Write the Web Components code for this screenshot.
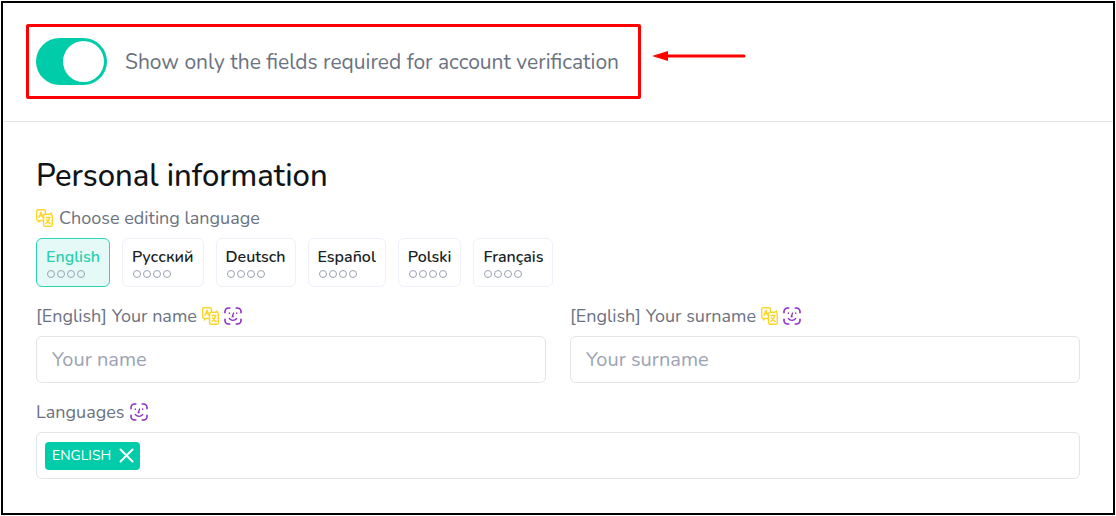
<!DOCTYPE html>
<html lang="en">
<head>
<meta charset="utf-8">
<title>Personal information</title>
<style>
  body {
    margin: 0;
    padding: 1px;
    background: #fff;
    color: #6b7280;
    font-family: Nunito, "Open Sans", "Noto Sans", sans-serif;
    --accent: #00ccaa;
    --line: #e2e4e8;
    --ink: #111417;
    --muted: #9ca3b4;
  }
</style>
</head>
<body>
<profile-page></profile-page>

<template id="profile-page">
  <style>
    :host { display: block; box-sizing: border-box; min-height: calc(100vh - 2px); border: 2px solid #000; }
    header { display: flex; align-items: center; gap: 11px; padding: 21px 24px 22px 23px; border-bottom: 1px solid var(--line); }
    .arrow { flex: none; margin-bottom: 12px; }
    main { padding: 34px 33px 33px; }
    h1 { margin: 0 0 10px; font-size: 31px; line-height: 40px; font-weight: 500; color: var(--ink); }
    .hint { display: flex; align-items: center; gap: 6px; margin-bottom: 8px; font-size: 18px; line-height: 24px; }
    .tabs { display: flex; flex-wrap: wrap; gap: 12px; margin-bottom: 17px; }
    .row { display: grid; grid-template-columns: 1fr 1fr; gap: 24px; margin-bottom: 17px; }
  </style>
  <header>
    <toggle-switch>Show only the fields required for account verification</toggle-switch>
    <svg class="arrow" width="94" height="10" viewBox="0 0 94 10" aria-hidden="true">
      <path d="M14 5H92" stroke="#f00" stroke-width="3" stroke-linecap="round"/>
      <path d="M0 5L16 0V10Z" fill="#f00"/>
    </svg>
  </header>
  <main>
    <h1>Personal information</h1>
    <div class="hint"><translate-icon></translate-icon><span>Choose editing language</span></div>
    <div class="tabs">
      <language-tab active>English</language-tab>
      <language-tab>Русский</language-tab>
      <language-tab>Deutsch</language-tab>
      <language-tab>Español</language-tab>
      <language-tab>Polski</language-tab>
      <language-tab>Français</language-tab>
    </div>
    <div class="row">
      <text-field label="[English] Your name" hint="Your name"><translate-icon></translate-icon><face-icon></face-icon></text-field>
      <text-field label="[English] Your surname" hint="Your surname"><translate-icon></translate-icon><face-icon></face-icon></text-field>
    </div>
    <tag-field label="Languages"><face-icon slot="icons"></face-icon><tag-chip>ENGLISH</tag-chip></tag-field>
  </main>
</template>

<template id="toggle-switch">
  <style>
    :host { display: block; min-width: 0; }
    label { display: flex; align-items: center; gap: 18px; padding: 11px 19px 11px 7px; border: 3px solid #f00; border-radius: 2px; font-size: 21px; line-height: 28px; cursor: pointer; }
    input { appearance: none; flex: none; display: flex; align-items: center; box-sizing: border-box; width: 71px; height: 47px; margin: 0; padding: 3px; border-radius: 24px; background: #c9ced6; cursor: pointer; }
    input::before { content: ""; width: 41px; height: 41px; border-radius: 50%; background: #fff; }
    input:checked { justify-content: flex-end; background: var(--accent); }
  </style>
  <label><input type="checkbox" role="switch" checked><span><slot></slot></span></label>
</template>

<template id="language-tab">
  <style>
    :host { display: block; }
    button { display: block; box-sizing: border-box; height: 49px; margin: 0; padding: 6px 9px; border: 1px solid #edf1fb; border-radius: 6px; background: #fff; color: #1b1f24; font: inherit; font-size: 16px; line-height: 22px; font-weight: 600; text-align: left; cursor: pointer; }
    .name { display: block; }
    :host([active]) button { border-color: #2bd4b4; background: #e5f9f6; color: #2bcfae; }
    .dots { display: flex; gap: 2px; padding: 2px 1px; }
    .dots i { box-sizing: border-box; width: 8px; height: 8px; border: 1px solid #9ba2b2; border-radius: 50%; }
  </style>
  <button type="button"><span class="name"><slot></slot></span><span class="dots"><i></i><i></i><i></i><i></i></span></button>
</template>

<template id="text-field">
  <style>
    :host { display: block; min-width: 0; }
    .head { display: flex; align-items: center; gap: 5px; margin-bottom: 8px; font-size: 18px; line-height: 24px; }
    input { display: block; box-sizing: border-box; width: 100%; height: 47px; margin: 0; padding: 0 15px; border: 1px solid var(--line); border-radius: 6px; background: #fff; color: var(--ink); font: inherit; font-size: 20px; }
    input::placeholder { color: var(--muted); opacity: 1; }
  </style>
  <div class="head"><label for="field"></label><slot></slot></div>
  <input id="field" type="text">
</template>

<template id="tag-field">
  <style>
    :host { display: block; }
    .head { display: flex; align-items: center; gap: 5px; margin-bottom: 8px; font-size: 18px; line-height: 24px; }
    .box { display: flex; align-items: center; box-sizing: border-box; min-height: 47px; padding: 8px; border: 1px solid var(--line); border-radius: 6px; }
  </style>
  <div class="head"><span id="caption"></span><slot name="icons"></slot></div>
  <div class="box" role="group" aria-labelledby="caption"><slot></slot></div>
</template>

<template id="tag-chip">
  <style>
    :host { display: flex; align-items: center; gap: 8px; box-sizing: border-box; height: 28px; padding: 0 6px 0 7px; border-radius: 4px; background: var(--accent); color: #fff; font-size: 14px; line-height: 20px; }
    button { display: flex; margin: 0; padding: 0; border: 0; background: none; color: inherit; cursor: pointer; }
  </style>
  <span><slot></slot></span>
  <button type="button" aria-label="Remove"><svg width="15" height="15" viewBox="0 0 15 15"><path d="M1.500 1.500L13.500 13.500M13.500 1.500L1.500 13.500" stroke="currentColor" stroke-width="2" stroke-linecap="round"/></svg></button>
</template>

<template id="translate-icon">
  <style>:host { display: block; flex: none; width: 17px; height: 18px; } svg { display: block; }</style>
  <svg width="17" height="18" viewBox="0 0 17 18" fill="none" stroke="#fdd52a" stroke-width="1.400" stroke-linejoin="round" stroke-linecap="round" aria-hidden="true">
    <path d="M7 11.500H3.500L2.400 13V11.500H2A1.400 1.400 0 0 1 .7 10.100V2A1.400 1.400 0 0 1 2 .7H8A1.400 1.400 0 0 1 9.400 2V5"/>
    <path d="M3 8.500L5 3.200L7 8.500M3.600 6.900H6.400"/>
    <path d="M9.200 5.300H13.800L15.400 4V5.600A1.400 1.400 0 0 1 16.300 7V16A1.400 1.400 0 0 1 15 17.300H9A1.400 1.400 0 0 1 7.600 16V7A1.600 1.600 0 0 1 9.200 5.300Z"/>
    <path d="M10 8.500H14M13.500 8.500C13.200 11.300 11.700 13.400 9.900 14.400M10.500 10.800C11.300 12.700 12.500 13.900 14.200 14.500"/>
  </svg>
</template>

<template id="face-icon">
  <style>:host { display: block; flex: none; width: 18px; height: 18px; } svg { display: block; }</style>
  <svg width="18" height="18" viewBox="0 0 18 18" fill="none" stroke="#8b2fc4" stroke-width="1.600" stroke-linecap="round" aria-hidden="true">
    <path d="M1 5.800V4.500A3.500 3.500 0 0 1 4.500 1H5.800M12.200 1H13.500A3.500 3.500 0 0 1 17 4.500V5.800M17 12.200V13.500A3.500 3.500 0 0 1 13.500 17H12.200M5.800 17H4.500A3.500 3.500 0 0 1 1 13.500V12.200"/>
    <path d="M5.300 5.800V6.400M12.700 5.800V6.400M9.600 6L8.300 9.600H9.300M5.300 11.500C7.300 13.900 10.700 13.900 12.700 11.500" stroke-width="1.300"/>
  </svg>
</template>

<script>
  class TemplateElement extends HTMLElement {
    constructor() {
      super();
      const template = document.getElementById(this.localName);
      this.attachShadow({ mode: "open" }).append(template.content.cloneNode(true));
    }
  }

  class ToggleSwitch extends TemplateElement {}
  class TranslateIcon extends TemplateElement {}
  class FaceIcon extends TemplateElement {}
  class ProfilePage extends TemplateElement {
    connectedCallback() {
      const tabs = this.shadowRoot.querySelectorAll("language-tab");
      tabs.forEach(tab => tab.addEventListener("click", () => {
        tabs.forEach(other => other.toggleAttribute("active", other === tab));
      }));
    }
  }
  class LanguageTab extends TemplateElement {
    static observedAttributes = ["active"];
    attributeChangedCallback() {
      this.shadowRoot.querySelector("button").setAttribute("aria-pressed", this.hasAttribute("active"));
    }
  }
  class TextField extends TemplateElement {
    connectedCallback() {
      this.shadowRoot.querySelector("label").textContent = this.getAttribute("label");
      this.shadowRoot.querySelector("input").placeholder = this.getAttribute("hint");
    }
  }
  class TagField extends TemplateElement {
    connectedCallback() {
      this.shadowRoot.getElementById("caption").textContent = this.getAttribute("label");
    }
  }
  class TagChip extends TemplateElement {
    connectedCallback() {
      this.shadowRoot.querySelector("button").onclick = () => this.remove();
    }
  }

  customElements.define("toggle-switch", ToggleSwitch);
  customElements.define("translate-icon", TranslateIcon);
  customElements.define("face-icon", FaceIcon);
  customElements.define("language-tab", LanguageTab);
  customElements.define("text-field", TextField);
  customElements.define("tag-chip", TagChip);
  customElements.define("tag-field", TagField);
  customElements.define("profile-page", ProfilePage);
</script>
</body>
</html>
